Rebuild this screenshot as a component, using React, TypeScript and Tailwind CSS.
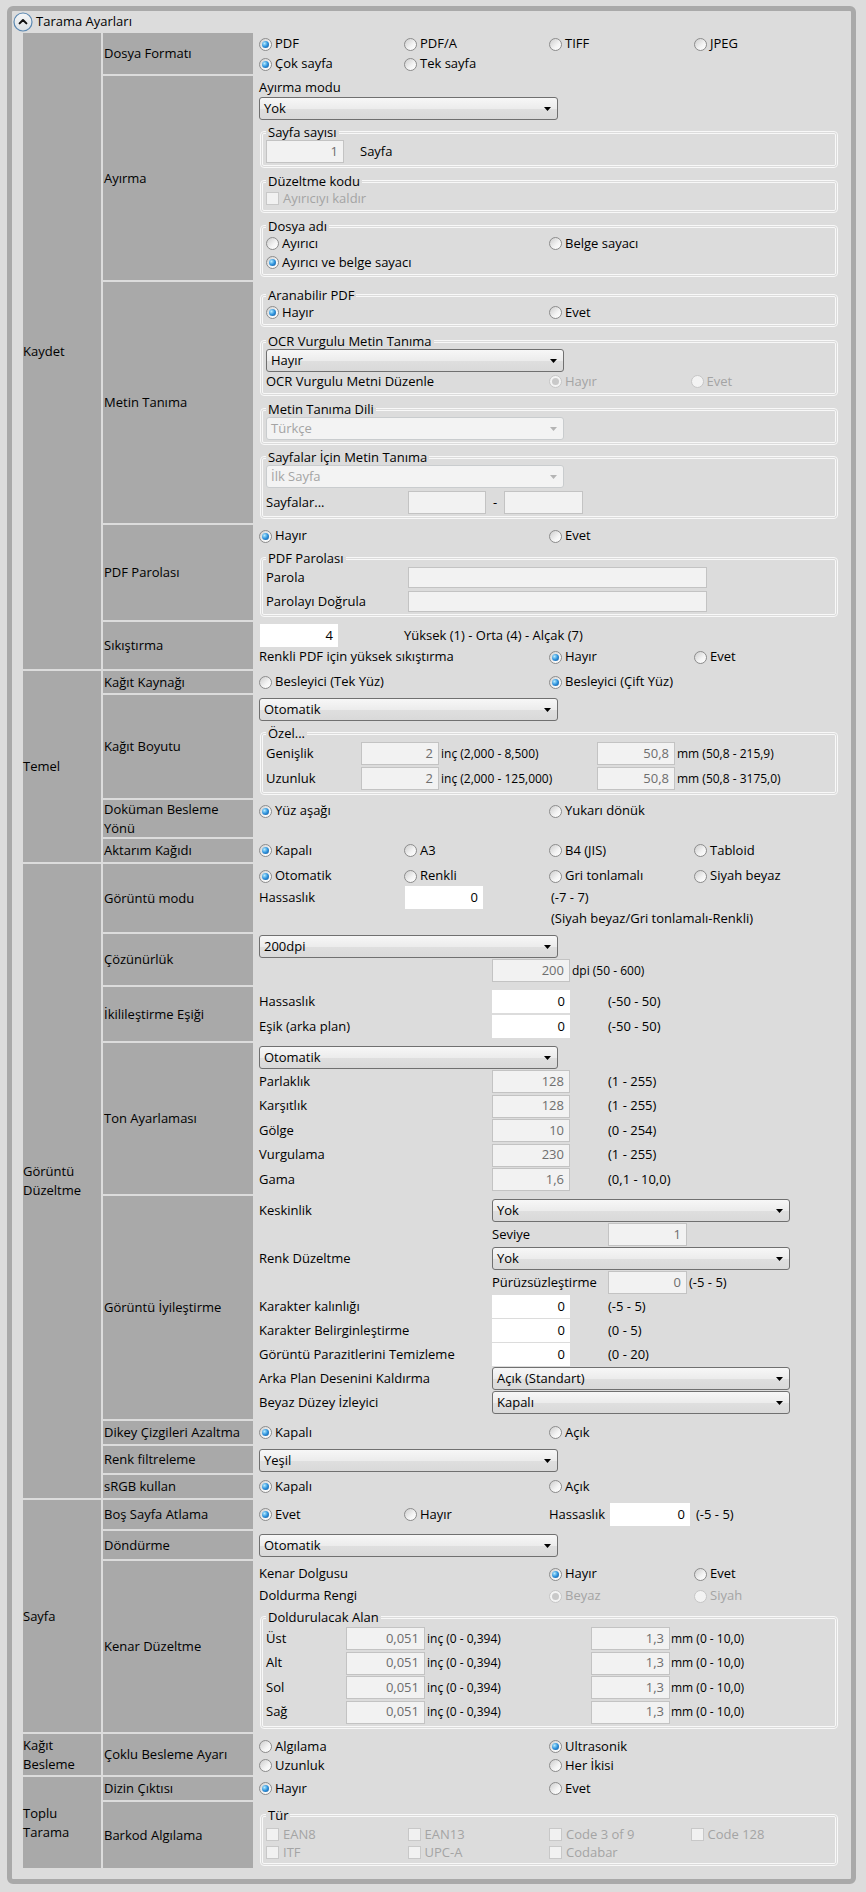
import clsx, { type ClassValue } from "clsx";
import type { ReactNode } from "react";
import { twMerge } from "tailwind-merge";

function cn(...inputs: ClassValue[]) {
  return twMerge(clsx(inputs));
}

function Radio({ label, checked = false, disabled = false, className }: { label: string; checked?: boolean; disabled?: boolean; className?: string }) {
  return (
    <span className={cn("flex items-center gap-[3px] whitespace-nowrap", className)}>
      <span
        className={cn(
          "flex h-[13px] w-[13px] shrink-0 items-center justify-center rounded-full border",
          disabled
            ? "border-[#c6c6c6] bg-[#f3f3f3]"
            : "border-[#8c8c8c] bg-[linear-gradient(135deg,#cdcdcd,#f4f4f4_60%,#ffffff)]"
        )}
      >
        {checked ? (
          <span
            className={cn(
              "h-[7px] w-[7px] rounded-full",
              disabled ? "bg-[#c9c9c9]" : "bg-[radial-gradient(circle_at_35%_35%,#b5ecff_0%,#2e92dc_50%,#15508f_100%)]"
            )}
          />
        ) : null}
      </span>
      <span className={disabled ? "text-[#a4a4a4]" : undefined}>{label}</span>
    </span>
  );
}

function Checkbox({ label, className }: { label: string; className?: string }) {
  return (
    <span className={cn("flex items-center gap-[4px] whitespace-nowrap text-[#a4a4a4]", className)}>
      <span className="h-[13px] w-[13px] shrink-0 border border-[#c8c8c8] bg-[#f1f1f1]" />
      <span>{label}</span>
    </span>
  );
}

function Select({ value, disabled = false, className }: { value: string; disabled?: boolean; className?: string }) {
  return (
    <div
      className={cn(
        "flex h-[23px] w-[298px] shrink-0 items-center justify-between rounded-[3px] border pl-[4px] pr-[6px]",
        disabled
          ? "border-[#c9ccce] bg-[#f3f3f3] text-[#a4a4a4]"
          : "border-[#707070] bg-[linear-gradient(#f7f7f7,#ececec_50%,#dfdfdf_51%,#d9d9d9)]",
        className
      )}
    >
      <span className="whitespace-nowrap">{value}</span>
      <svg width="7" height="4" viewBox="0 0 7 4">
        <path d="M0 0H7L3.5 4Z" fill={disabled ? "#b4b4b4" : "#000"} />
      </svg>
    </div>
  );
}

function Input({ value = "", disabled = false, className }: { value?: string; disabled?: boolean; className?: string }) {
  return (
    <div
      className={cn(
        "flex h-[23px] w-[78px] shrink-0 items-center justify-end pr-[5px]",
        disabled ? "border border-[#c3c3c3] bg-[#f2f2f2] text-[#6e6e6e]" : "bg-white",
        className
      )}
    >
      {value}
    </div>
  );
}

function Group({ title, children, className }: { title: string; children: ReactNode; className?: string }) {
  return (
    <fieldset className={cn("mx-[1px] rounded-[4px] border-[3px] border-double border-[#f8f8f8] px-[3px] pb-[2px]", className)}>
      <legend className="px-[2px] leading-[16px]">{title}</legend>
      {children}
    </fieldset>
  );
}

function Row({ label, h, children, className }: { label: ReactNode; h: string; children?: ReactNode; className?: string }) {
  return (
    <div className={cn("flex", h)}>
      <div className="flex w-[150px] shrink-0 items-center bg-[#a9a9a9] pl-[1px] leading-[19px]">{label}</div>
      <div className={cn("min-w-0 flex-1 pl-[6px]", className)}>{children}</div>
    </div>
  );
}

function Section({ label, children }: { label: ReactNode; children: ReactNode }) {
  return (
    <div className="flex gap-[2px]">
      <div className="flex w-[78px] shrink-0 items-center bg-[#a9a9a9] leading-[19px]">{label}</div>
      <div className="flex min-w-0 flex-1 flex-col gap-[2px]">{children}</div>
    </div>
  );
}

function FieldRow({ label, value, range, disabled = false }: { label: string; value: string; range: string; disabled?: boolean }) {
  return (
    <div className="flex h-[23px] items-center">
      <span className="w-[233px] shrink-0 whitespace-nowrap">{label}</span>
      <Input value={value} disabled={disabled} />
      <span className="ml-[38px]">{range}</span>
    </div>
  );
}

function MarginRow({ label }: { label: string }) {
  return (
    <div className="flex h-[23px] items-center">
      <span className="w-[80px] shrink-0">{label}</span>
      <Input value="0,051" disabled className="w-[79px]" />
      <span className="w-[166px] shrink-0 pl-[2px] text-[12px]">inç (0 - 0,394)</span>
      <Input value="1,3" disabled className="w-[79px]" />
      <span className="pl-[1px] text-[12px]">mm (0 - 10,0)</span>
    </div>
  );
}

function CollapseIcon() {
  return (
    <svg width="20" height="20" viewBox="0 0 20 20">
      <defs>
        <linearGradient id="collapse-fill" x1="0" y1="0" x2="0" y2="1">
          <stop offset="0" stopColor="#f5f6f7" />
          <stop offset="1" stopColor="#dde2e6" />
        </linearGradient>
      </defs>
      <circle cx="10" cy="10" r="9" fill="url(#collapse-fill)" stroke="#5b88b1" strokeWidth="1.2" />
      <path d="M6.6 11.4L10 8l3.4 3.4" fill="none" stroke="#111" strokeWidth="2" strokeLinecap="round" strokeLinejoin="round" />
    </svg>
  );
}

export default function App() {
  return (
    <div className="min-h-screen bg-[#dcdcdc] pl-[7px] pt-[6px] font-['Open_Sans',sans-serif] text-[13px] text-black">
      <div className="w-[849px] rounded-[6px] border-[5px] border-[#a9a9a9] pb-[11px]">
        <div className="flex h-[22px] items-center gap-[3px] pl-[1px]">
          <CollapseIcon />
          <span>Tarama Ayarları</span>
        </div>

        <div className="ml-[11px] mr-[12px] flex flex-col gap-[2px]">
          <Section label="Kaydet">
            <Row label="Dosya Formatı" h="h-[41px]" className="pt-[1px]">
              <div className="grid h-[20px] grid-cols-4 items-center">
                <Radio label="PDF" checked />
                <Radio label="PDF/A" />
                <Radio label="TIFF" />
                <Radio label="JPEG" />
              </div>
              <div className="grid h-[20px] grid-cols-4 items-center">
                <Radio label="Çok sayfa" checked />
                <Radio label="Tek sayfa" />
              </div>
            </Row>

            <Row label="Ayırma" h="h-[204px]" className="pt-[2px]">
              <div className="h-[19px] leading-[19px]">Ayırma modu</div>
              <Select value="Yok" className="w-[299px]" />
              <Group title="Sayfa sayısı" className="mt-[4px]">
                <div className="flex h-[23px] items-center">
                  <Input value="1" disabled />
                  <span className="ml-[16px]">Sayfa</span>
                </div>
              </Group>
              <Group title="Düzeltme kodu" className="mt-[5px]">
                <div className="flex h-[19px] items-center">
                  <Checkbox label="Ayırıcıyı kaldır" />
                </div>
              </Group>
              <Group title="Dosya adı" className="mt-[5px]">
                <div className="grid h-[19px] grid-cols-2 items-center">
                  <Radio label="Ayırıcı" />
                  <Radio label="Belge sayacı" />
                </div>
                <div className="grid h-[19px] grid-cols-2 items-center">
                  <Radio label="Ayırıcı ve belge sayacı" checked />
                </div>
              </Group>
            </Row>

            <Row label="Metin Tanıma" h="h-[241px]">
              <Group title="Aranabilir PDF" className="mt-[5px]">
                <div className="grid h-[19px] grid-cols-2 items-center">
                  <Radio label="Hayır" checked />
                  <Radio label="Evet" />
                </div>
              </Group>
              <Group title="OCR Vurgulu Metin Tanıma" className="mt-[6px]">
                <Select value="Hayır" />
                <div className="grid h-[19px] grid-cols-4 items-center">
                  <span className="col-span-2">OCR Vurgulu Metni Düzenle</span>
                  <Radio label="Hayır" checked disabled />
                  <Radio label="Evet" disabled />
                </div>
              </Group>
              <Group title="Metin Tanıma Dili" className="mt-[5px]">
                <Select value="Türkçe" disabled />
              </Group>
              <Group title="Sayfalar İçin Metin Tanıma" className="mt-[4px]">
                <Select value="İlk Sayfa" disabled />
                <div className="mt-[3px] flex h-[23px] items-center">
                  <span className="w-[142px] shrink-0">Sayfalar...</span>
                  <Input disabled />
                  <span className="w-[18px] text-center">-</span>
                  <Input disabled className="w-[79px]" />
                </div>
              </Group>
            </Row>

            <Row label="PDF Parolası" h="h-[95px]" className="pt-[1px]">
              <div className="grid h-[20px] grid-cols-2 items-center">
                <Radio label="Hayır" checked />
                <Radio label="Evet" />
              </div>
              <Group title="PDF Parolası" className="mt-[4px]">
                <div className="mt-[1px] flex h-[21px] items-center">
                  <span className="w-[142px] shrink-0">Parola</span>
                  <Input disabled className="h-[21px] w-[299px]" />
                </div>
                <div className="mt-[3px] flex h-[21px] items-center">
                  <span className="w-[142px] shrink-0">Parolayı Doğrula</span>
                  <Input disabled className="h-[21px] w-[299px]" />
                </div>
              </Group>
            </Row>

            <Row label="Sıkıştırma" h="h-[47px]" className="pt-[2px]">
              <div className="flex h-[23px] items-center">
                <div className="w-[145px] shrink-0">
                  <Input value="4" className="ml-[1px]" />
                </div>
                <span>Yüksek (1) - Orta (4) - Alçak (7)</span>
              </div>
              <div className="grid h-[20px] grid-cols-4 items-center">
                <span className="col-span-2">Renkli PDF için yüksek sıkıştırma</span>
                <Radio label="Hayır" checked />
                <Radio label="Evet" />
              </div>
            </Row>
          </Section>

          <Section label="Temel">
            <Row label="Kağıt Kaynağı" h="h-[22px]" className="grid grid-cols-2 items-center">
              <Radio label="Besleyici (Tek Yüz)" />
              <Radio label="Besleyici (Çift Yüz)" checked />
            </Row>

            <Row label="Kağıt Boyutu" h="h-[103px]" className="pt-[3px]">
              <Select value="Otomatik" className="w-[299px]" />
              <Group title="Özel..." className="mt-[4px]">
                <div className="mt-[1px] flex flex-col gap-[2px]">
                  <div className="flex h-[23px] items-center">
                    <span className="w-[95px] shrink-0">Genişlik</span>
                    <Input value="2" disabled />
                    <span className="ml-[2px] w-[156px] shrink-0 text-[12px]">inç (2,000 - 8,500)</span>
                    <Input value="50,8" disabled />
                    <span className="ml-[2px] text-[12px]">mm (50,8 - 215,9)</span>
                  </div>
                  <div className="flex h-[23px] items-center">
                    <span className="w-[95px] shrink-0">Uzunluk</span>
                    <Input value="2" disabled />
                    <span className="ml-[2px] w-[156px] shrink-0 text-[12px]">inç (2,000 - 125,000)</span>
                    <Input value="50,8" disabled />
                    <span className="ml-[2px] text-[12px]">mm (50,8 - 3175,0)</span>
                  </div>
                </div>
              </Group>
            </Row>

            <Row
              label={
                <span>
                  Doküman Besleme
                  <br />
                  Yönü
                </span>
              }
              h="h-[37px]"
              className="pt-[1px]"
            >
              <div className="grid h-[20px] grid-cols-2 items-center">
                <Radio label="Yüz aşağı" checked />
                <Radio label="Yukarı dönük" />
              </div>
            </Row>

            <Row label="Aktarım Kağıdı" h="h-[23px]" className="grid grid-cols-4 items-center">
              <Radio label="Kapalı" checked />
              <Radio label="A3" />
              <Radio label="B4 (JIS)" />
              <Radio label="Tabloid" />
            </Row>
          </Section>

          <Section label="Görüntü Düzeltme">
            <Row label="Görüntü modu" h="h-[68px]" className="pt-[2px]">
              <div className="grid h-[20px] grid-cols-4 items-center">
                <Radio label="Otomatik" checked />
                <Radio label="Renkli" />
                <Radio label="Gri tonlamalı" />
                <Radio label="Siyah beyaz" />
              </div>
              <div className="grid h-[23px] grid-cols-4 items-center">
                <span>Hassaslık</span>
                <Input value="0" className="ml-[1px]" />
                <span className="ml-[2px]">(-7 - 7)</span>
              </div>
              <div className="grid h-[20px] grid-cols-4 items-center">
                <span className="col-span-2 col-start-3 ml-[2px] whitespace-nowrap">(Siyah beyaz/Gri tonlamalı-Renkli)</span>
              </div>
            </Row>

            <Row label="Çözünürlük" h="h-[51px]" className="pt-[1px]">
              <Select value="200dpi" className="w-[299px]" />
              <div className="mt-[1px] flex h-[23px] items-center pl-[233px]">
                <Input value="200" disabled />
                <span className="ml-[2px] text-[12px]">dpi (50 - 600)</span>
              </div>
            </Row>

            <Row label="İkilileştirme Eşiği" h="h-[54px]" className="flex flex-col gap-[2px] pt-[3px]">
              <FieldRow label="Hassaslık" value="0" range="(-50 - 50)" />
              <FieldRow label="Eşik (arka plan)" value="0" range="(-50 - 50)" />
            </Row>

            <Row label="Ton Ayarlaması" h="h-[151px]" className="pt-[3px]">
              <Select value="Otomatik" className="w-[299px]" />
              <div className="mt-[1px] flex flex-col gap-[1.5px]">
                <FieldRow label="Parlaklık" value="128" range="(1 - 255)" disabled />
                <FieldRow label="Karşıtlık" value="128" range="(1 - 255)" disabled />
                <FieldRow label="Gölge" value="10" range="(0 - 254)" disabled />
                <FieldRow label="Vurgulama" value="230" range="(1 - 255)" disabled />
                <FieldRow label="Gama" value="1,6" range="(0,1 - 10,0)" disabled />
              </div>
            </Row>

            <Row label="Görüntü İyileştirme" h="h-[223px]" className="flex flex-col gap-[1px] pt-[3px]">
              <div className="flex h-[23px] items-center">
                <span className="w-[233px] shrink-0">Keskinlik</span>
                <Select value="Yok" />
              </div>
              <div className="flex h-[23px] items-center pl-[233px]">
                <span className="w-[116px] shrink-0">Seviye</span>
                <Input value="1" disabled className="w-[79px]" />
              </div>
              <div className="flex h-[23px] items-center">
                <span className="w-[233px] shrink-0">Renk Düzeltme</span>
                <Select value="Yok" />
              </div>
              <div className="flex h-[23px] items-center pl-[233px]">
                <span className="w-[116px] shrink-0 whitespace-nowrap">Pürüzsüzleştirme</span>
                <Input value="0" disabled className="w-[79px]" />
                <span className="ml-[2px]">(-5 - 5)</span>
              </div>
              <FieldRow label="Karakter kalınlığı" value="0" range="(-5 - 5)" />
              <FieldRow label="Karakter Belirginleştirme" value="0" range="(0 - 5)" />
              <FieldRow label="Görüntü Parazitlerini Temizleme" value="0" range="(0 - 20)" />
              <div className="flex h-[23px] items-center">
                <span className="w-[233px] shrink-0">Arka Plan Desenini Kaldırma</span>
                <Select value="Açık (Standart)" />
              </div>
              <div className="flex h-[23px] items-center">
                <span className="w-[233px] shrink-0">Beyaz Düzey İzleyici</span>
                <Select value="Kapalı" />
              </div>
            </Row>

            <Row label="Dikey Çizgileri Azaltma" h="h-[23px]" className="grid grid-cols-2 items-center">
              <Radio label="Kapalı" checked />
              <Radio label="Açık" />
            </Row>

            <Row label="Renk filtreleme" h="h-[27px]" className="pt-[3px]">
              <Select value="Yeşil" className="w-[299px]" />
            </Row>

            <Row label="sRGB kullan" h="h-[23px]" className="grid grid-cols-2 items-center">
              <Radio label="Kapalı" checked />
              <Radio label="Açık" />
            </Row>
          </Section>

          <Section label="Sayfa">
            <Row label="Boş Sayfa Atlama" h="h-[29px]" className="grid grid-cols-4 items-center">
              <Radio label="Evet" checked />
              <Radio label="Hayır" />
              <div className="col-span-2 flex items-center">
                <span className="w-[61px] shrink-0">Hassaslık</span>
                <Input value="0" className="w-[80px]" />
                <span className="ml-[6px]">(-5 - 5)</span>
              </div>
            </Row>

            <Row label="Döndürme" h="h-[28px]" className="pt-[3px]">
              <Select value="Otomatik" className="w-[299px]" />
            </Row>

            <Row label="Kenar Düzeltme" h="h-[171px]" className="pt-[2px]">
              <div className="grid h-[22px] grid-cols-4 items-center">
                <span className="col-span-2">Kenar Dolgusu</span>
                <Radio label="Hayır" checked />
                <Radio label="Evet" />
              </div>
              <div className="grid h-[22px] grid-cols-4 items-center">
                <span className="col-span-2">Doldurma Rengi</span>
                <Radio label="Beyaz" checked disabled />
                <Radio label="Siyah" disabled />
              </div>
              <Group title="Doldurulacak Alan" className="mt-[2px]">
                <div className="mt-[2px] flex flex-col gap-[1.5px]">
                  <MarginRow label="Üst" />
                  <MarginRow label="Alt" />
                  <MarginRow label="Sol" />
                  <MarginRow label="Sağ" />
                </div>
              </Group>
            </Row>
          </Section>

          <Section label="Kağıt Besleme">
            <Row label="Çoklu Besleme Ayarı" h="h-[41px]" className="pt-[3px]">
              <div className="grid h-[19px] grid-cols-2 items-center">
                <Radio label="Algılama" />
                <Radio label="Ultrasonik" checked />
              </div>
              <div className="grid h-[19px] grid-cols-2 items-center">
                <Radio label="Uzunluk" />
                <Radio label="Her İkisi" />
              </div>
            </Row>
          </Section>

          <Section label="Toplu Tarama">
            <Row label="Dizin Çıktısı" h="h-[23px]" className="grid grid-cols-2 items-center">
              <Radio label="Hayır" checked />
              <Radio label="Evet" />
            </Row>

            <Row label="Barkod Algılama" h="h-[66px]">
              <Group title="Tür" className="mt-[5px]">
                <div className="mt-[2px] grid h-[18px] grid-cols-4 items-center">
                  <Checkbox label="EAN8" />
                  <Checkbox label="EAN13" />
                  <Checkbox label="Code 3 of 9" />
                  <Checkbox label="Code 128" />
                </div>
                <div className="grid h-[18px] grid-cols-4 items-center">
                  <Checkbox label="ITF" />
                  <Checkbox label="UPC-A" />
                  <Checkbox label="Codabar" />
                </div>
              </Group>
            </Row>
          </Section>
        </div>
      </div>
    </div>
  );
}
